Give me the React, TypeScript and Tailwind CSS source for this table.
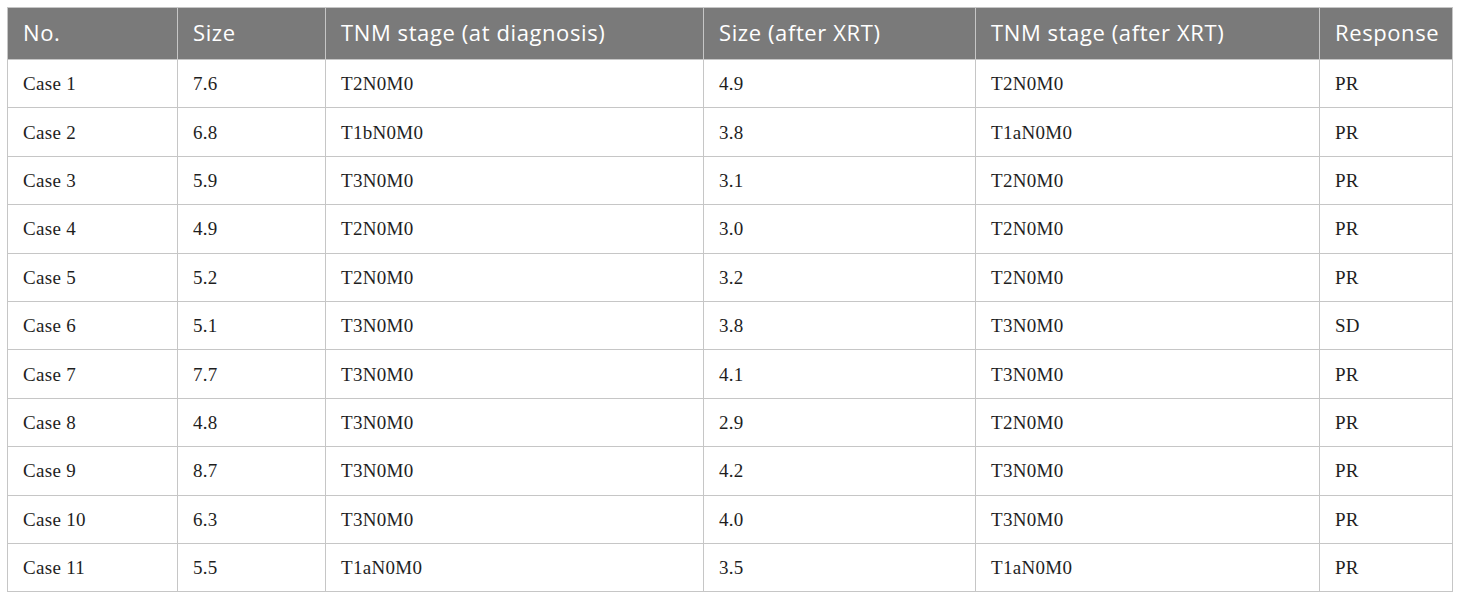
const headers = [
  "No.",
  "Size",
  "TNM stage (at diagnosis)",
  "Size (after XRT)",
  "TNM stage (after XRT)",
  "Response",
];

const widths = ["w-[170px]", "w-[148px]", "w-[378px]", "w-[272px]", "w-[344px]", "w-[133px]"];

const rows = [
  ["Case 1", "7.6", "T2N0M0", "4.9", "T2N0M0", "PR"],
  ["Case 2", "6.8", "T1bN0M0", "3.8", "T1aN0M0", "PR"],
  ["Case 3", "5.9", "T3N0M0", "3.1", "T2N0M0", "PR"],
  ["Case 4", "4.9", "T2N0M0", "3.0", "T2N0M0", "PR"],
  ["Case 5", "5.2", "T2N0M0", "3.2", "T2N0M0", "PR"],
  ["Case 6", "5.1", "T3N0M0", "3.8", "T3N0M0", "SD"],
  ["Case 7", "7.7", "T3N0M0", "4.1", "T3N0M0", "PR"],
  ["Case 8", "4.8", "T3N0M0", "2.9", "T2N0M0", "PR"],
  ["Case 9", "8.7", "T3N0M0", "4.2", "T3N0M0", "PR"],
  ["Case 10", "6.3", "T3N0M0", "4.0", "T3N0M0", "PR"],
  ["Case 11", "5.5", "T1aN0M0", "3.5", "T1aN0M0", "PR"],
];

export default function App() {
  return (
    <div className="min-h-[599px] w-[1460px] bg-white pl-[7px] pt-[7px]">
      <table className="w-[1446px] table-fixed border-collapse">
        <thead>
          <tr className="h-[52px] bg-[#7a7a7a]">
            {headers.map((h, i) => (
              <th
                key={h}
                className={`${widths[i]} border border-[#c6c6c6] px-[15px] pb-[4px] text-left align-middle text-[22px] font-normal leading-none tracking-[0.6px] text-white font-['Open_Sans',sans-serif]`}
              >
                {h}
              </th>
            ))}
          </tr>
        </thead>
        <tbody>
          {rows.map((r) => (
            <tr key={r[0]} className="h-[48.4px]">
              {r.map((c, i) => (
                <td
                  key={i}
                  className="border border-[#c6c6c6] px-[15px] align-middle text-[19px] leading-none tracking-[0.3px] text-[#1e1e1e] font-['Liberation_Serif',serif]"
                >
                  {c}
                </td>
              ))}
            </tr>
          ))}
        </tbody>
      </table>
    </div>
  );
}
